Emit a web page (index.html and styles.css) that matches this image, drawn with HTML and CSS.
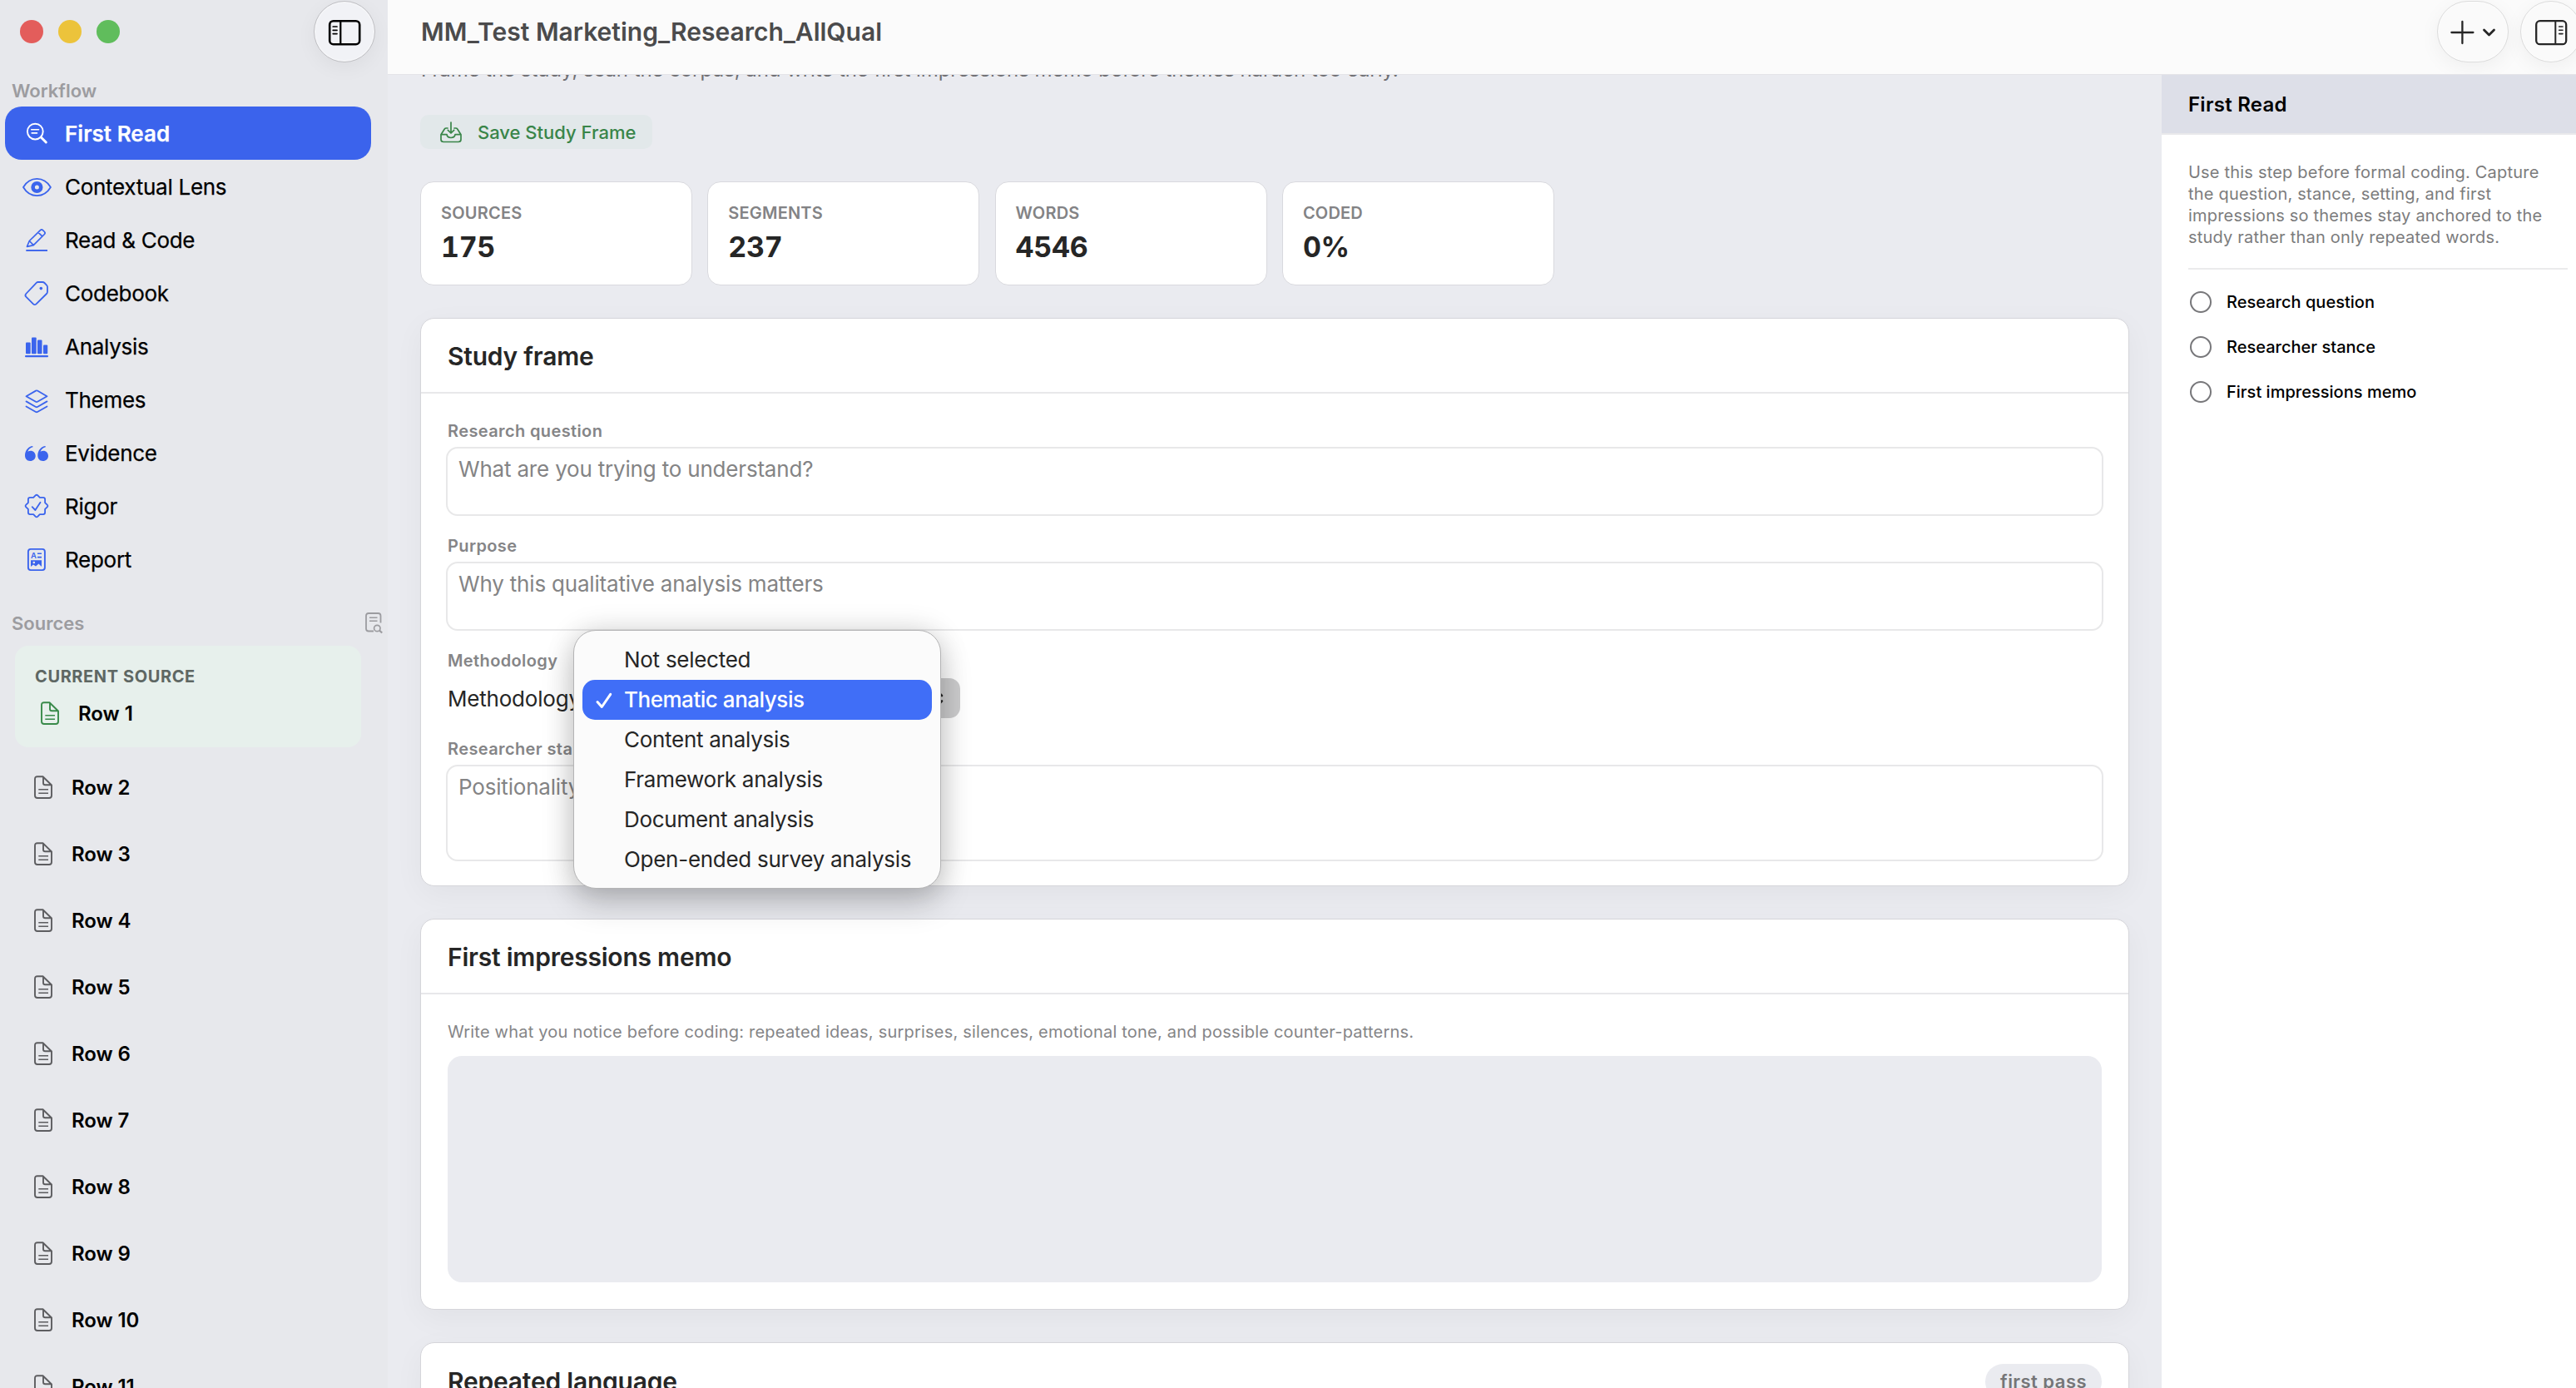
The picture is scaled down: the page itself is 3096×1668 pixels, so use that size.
FILE: index.html
```
<!DOCTYPE html>
<html lang="en">
<head>
<meta charset="utf-8">
<title>MM_Test Marketing_Research_AllQual</title>
<link rel="stylesheet" href="styles.css">
</head>
<body>
<svg class="defs" width="0" height="0">
  <symbol id="doc" viewBox="0 0 24 30">
    <path d="M5 2.2H11.5L22 12.5V25Q22 28 19 28H5Q2 28 2 25V5.2Q2 2.2 5 2.2Z M12 2.5V10Q12 12.3 14.3 12.3H21.8" fill="none" stroke="currentColor" stroke-width="1.9" stroke-linejoin="round"/>
    <path d="M6.3 17.8H18M6.3 22.2H18" fill="none" stroke="currentColor" stroke-width="1.5"/>
  </symbol>
</svg>
<div class="window">
  <aside class="sidebar">
    <div class="titlebar">
      <div class="lights"><i class="light red"></i><i class="light yellow"></i><i class="light green"></i></div>
      <button class="glass round" aria-label="Toggle sidebar">
        <svg width="40" height="32" viewBox="0 0 40 32" fill="none" stroke="currentColor"><rect x="2.2" y="2.2" width="36" height="28" rx="4.5" stroke-width="2.6"/><path d="M15.3 2V30" stroke-width="2.2"/><path d="M6.2 9H11M6.2 13.3H11M6.2 17.6H11" stroke-width="1.7" stroke-linecap="round"/></svg>
      </button>
    </div>

    <h2 class="section">Workflow</h2>
    <nav class="nav">
      <a class="nav-item active"><svg class="nav-icon" viewBox="0 0 36 36" fill="none" stroke="currentColor" stroke-linecap="round"><circle cx="16.3" cy="16.1" r="9.4" stroke-width="1.9"/><path d="M23.3 23L29.3 29" stroke-width="3"/><path d="M11.7 13.8H20.5M12.2 17.9H18.5" stroke-width="1.6"/></svg>First Read</a>
      <a class="nav-item"><svg class="nav-icon" viewBox="0 0 36 36" fill="none" stroke="currentColor"><path d="M2 19C5.500 13 11.500 8.900 18.400 8.900S31.300 13 34.900 19C31.300 25 25.300 29.100 18.400 29.100S5.500 25 2 19Z" stroke-width="1.8" stroke-linejoin="round"/><circle cx="18.400" cy="19" r="4.800" stroke-width="4.600"/></svg>Contextual Lens</a>
      <a class="nav-item"><svg class="nav-icon" viewBox="0 0 36 36" fill="none" stroke="currentColor" stroke-width="1.7" stroke-linejoin="round"><path d="M6.500 26.300L9.300 19.500L22.500 6.600Q24 5.200 25.500 6.600L27.400 8.500Q28.900 10 27.400 11.500L14.300 24.600L6.500 26.300ZM20 9.300L25 14.200M9.300 19.500L14.300 24.600"/><path d="M5.300 31H31" stroke-width="1.900"/></svg>Read &amp; Code</a>
      <a class="nav-item"><svg class="nav-icon" viewBox="0 0 36 36" fill="none" stroke="currentColor" stroke-width="1.800" stroke-linejoin="round"><path d="M19.500 5H25Q26.500 5 27.500 6L30 8.600Q31 9.600 31 11V16.500Q31 18 30 19L17.500 31.300Q15.700 33 14 31.300L5.300 22.600Q3.600 20.800 5.300 19L18 5.700Q18.700 5 19.500 5Z"/><circle cx="23.300" cy="12.600" r="1.800" fill="currentColor" stroke="none"/></svg>Codebook</a>
      <a class="nav-item"><svg class="nav-icon" viewBox="0 0 36 36" fill="currentColor"><rect x="5" y="13.500" width="5.700" height="13.700" rx="1"/><rect x="12" y="7.500" width="5.700" height="19.700" rx="1"/><rect x="19" y="10.400" width="5.500" height="16.800" rx="1"/><rect x="26" y="16.500" width="5.200" height="10.700" rx="1"/><rect x="4" y="29" width="28" height="2.200" rx="1"/></svg>Analysis</a>
      <a class="nav-item"><svg class="nav-icon" viewBox="0 0 36 36" fill="none" stroke="currentColor" stroke-width="1.800" stroke-linejoin="round" stroke-linecap="round"><path d="M17 7.600Q18 7 19 7.600L30.500 14.200L19 20.800Q18 21.400 17 20.800L5.500 14.200ZM5.500 20.400L17 27Q18 27.500 19 27L30.500 20.400M5.500 26.500L17 33Q18 33.500 19 33L30.500 26.500"/></svg>Themes</a>
      <a class="nav-item"><svg class="nav-icon" viewBox="0 0 36 36" fill="currentColor"><path d="M13.300 10C8.500 10.300 4 15 4 21.300C4 25.300 6.500 28 10.200 28C14 28 16.700 25.200 16.700 21.900C16.700 18.300 14.200 15.700 10.800 15.700C9.500 15.700 8.300 16 7.300 16.700C8.300 13.800 10.500 11.800 13.500 11.200Z"/><path transform="translate(15.300)" d="M13.300 10C8.500 10.300 4 15 4 21.300C4 25.300 6.500 28 10.200 28C14 28 16.700 25.200 16.700 21.900C16.700 18.300 14.200 15.700 10.800 15.700C9.500 15.700 8.300 16 7.300 16.700C8.300 13.800 10.500 11.800 13.500 11.200Z"/></svg>Evidence</a>
      <a class="nav-item"><svg class="nav-icon" viewBox="0 0 36 36" fill="none" stroke="currentColor" stroke-width="1.800" stroke-linejoin="round" stroke-linecap="round"><path d="M16.600 5.400Q18 4 19.400 5.400L21.800 7.900H25.800Q28.100 7.900 28.100 10.200V14.200L30.700 16.700Q32.100 18 30.700 19.400L28.100 21.900V25.800Q28.100 28.100 25.800 28.100H21.800L19.400 30.700Q18 32.100 16.600 30.700L14.200 28.100H10.200Q7.900 28.100 7.900 25.800V21.900L5.300 19.400Q3.900 18 5.300 16.700L7.900 14.200V10.200Q7.900 7.900 10.200 7.900H14.200Z"/><path d="M12.700 19.200L16.400 23L22.500 13.700"/></svg>Rigor</a>
      <a class="nav-item"><svg class="nav-icon" viewBox="0 0 36 36" fill="none" stroke="currentColor"><rect x="7.900" y="5.900" width="20" height="25.200" rx="3" stroke-width="1.900"/><text x="11" y="16.600" class="glyph-a">A</text><path d="M19 11.200H24M19 15.600H24" stroke-width="1.600"/><path d="M11 19.200H24V27L20.500 23.500L17 26.500L14 24.500L11 27Z" fill="currentColor" stroke="none"/><circle cx="14.800" cy="22" r="1.300" fill="#e7e8ec" stroke="none"/></svg>Report</a>
    </nav>

    <div class="section-row">
      <h2 class="section">Sources</h2>
      <svg width="24" height="28" viewBox="0 0 24 28" fill="none" stroke="currentColor"><path d="M11 23.500H5Q2 23.500 2 20.500V5Q2 2 5 2H16.500Q19.500 2 19.500 5V13.500" stroke-width="1.800"/><path d="M6 7.300H15.500M6 11.300H15.500" stroke-width="1.400"/><circle cx="15.300" cy="20" r="3.700" stroke-width="1.700"/><path d="M18 22.700L21.200 25.500" stroke-width="2.200"/></svg>
    </div>

    <div class="current">
      <div class="current-label">CURRENT SOURCE</div>
      <div class="current-row"><svg class="doc-icon"><use href="#doc"/></svg>Row 1</div>
    </div>
    <ul class="rows">
      <li><svg class="doc-icon"><use href="#doc"/></svg>Row 2</li>
      <li><svg class="doc-icon"><use href="#doc"/></svg>Row 3</li>
      <li><svg class="doc-icon"><use href="#doc"/></svg>Row 4</li>
      <li><svg class="doc-icon"><use href="#doc"/></svg>Row 5</li>
      <li><svg class="doc-icon"><use href="#doc"/></svg>Row 6</li>
      <li><svg class="doc-icon"><use href="#doc"/></svg>Row 7</li>
      <li><svg class="doc-icon"><use href="#doc"/></svg>Row 8</li>
      <li><svg class="doc-icon"><use href="#doc"/></svg>Row 9</li>
      <li><svg class="doc-icon"><use href="#doc"/></svg>Row 10</li>
      <li><svg class="doc-icon"><use href="#doc"/></svg>Row 11</li>
    </ul>
  </aside>

  <div class="content">
    <header class="toolbar">
      <h1 class="doc-title">MM_Test Marketing_Research_AllQual</h1>
      <div class="toolbar-actions">
        <button class="glass add" aria-label="Add">
          <svg width="56" height="30" viewBox="0 0 56 30" fill="none" stroke="currentColor" stroke-linecap="round" stroke-linejoin="round"><path d="M15.400 2V28M2.400 15H28.400" stroke-width="2.300"/><path d="M41.500 12L47.500 18L53.500 12" stroke-width="2.800"/></svg>
        </button>
        <button class="glass round" aria-label="Toggle inspector">
          <svg width="40" height="32" viewBox="0 0 40 32" fill="none" stroke="currentColor"><rect x="2.200" y="2.200" width="36" height="28" rx="4.500" stroke-width="2.300"/><path d="M25.300 2V30" stroke-width="2"/><path d="M29.700 9H34M29.700 13.300H34M29.700 17.600H34" stroke-width="1.600" stroke-linecap="round"/></svg>
        </button>
      </div>
    </header>

    <div class="body">
      <main class="main">
        <p class="subtitle">Frame the study, scan the corpus, and write the first impressions memo before themes harden too early.</p>
        <button class="save">
          <svg width="28" height="28" viewBox="0 0 28 28" fill="none" stroke="currentColor" stroke-width="1.700" stroke-linejoin="round" stroke-linecap="round"><path d="M10 9H8.200Q7 9 6.300 10L2 16.700V22.500Q2 25.500 5 25.500H23Q26 25.500 26 22.500V16.700L21.700 10Q21 9 19.800 9H18M2 16.700H9Q9.500 20.500 14 20.500T19 16.700H26"/><path d="M14 2V14.500M10.300 11.300L14 15L17.700 11.300"/></svg>
          Save Study Frame
        </button>

        <section class="stats">
          <div class="stat"><div class="stat-label">SOURCES</div><div class="stat-value">175</div></div>
          <div class="stat"><div class="stat-label">SEGMENTS</div><div class="stat-value">237</div></div>
          <div class="stat"><div class="stat-label">WORDS</div><div class="stat-value">4546</div></div>
          <div class="stat"><div class="stat-label">CODED</div><div class="stat-value">0%</div></div>
        </section>

        <section class="panel">
          <div class="panel-head"><h2>Study frame</h2></div>
          <div class="panel-body">
            <div class="field"><label>Research question</label><div class="input">What are you trying to understand?</div></div>
            <div class="field"><label>Purpose</label><div class="input">Why this qualitative analysis matters</div></div>
            <div class="field">
              <label>Methodology</label>
              <div class="picker">
                <span>Methodology</span>
                <div class="picker-button"><svg width="14" height="24" viewBox="0 0 14 24" fill="none" stroke="currentColor" stroke-width="2.600" stroke-linecap="round" stroke-linejoin="round"><path d="M2 9L7 4L12 9M2 15.500L7 20.500L12 15.500"/></svg></div>
                <ul class="menu">
                  <li>Not selected</li>
                  <li class="selected"><svg class="check" width="22" height="22" viewBox="0 0 22 22" fill="none" stroke="currentColor" stroke-width="3" stroke-linecap="round" stroke-linejoin="round"><path d="M3 12.500L8.300 18.500L18.700 3.300"/></svg>Thematic analysis</li>
                  <li>Content analysis</li>
                  <li>Framework analysis</li>
                  <li>Document analysis</li>
                  <li>Open-ended survey analysis</li>
                </ul>
              </div>
            </div>
            <div class="field stance"><label>Researcher stance</label><div class="input tall">Positionality</div></div>
          </div>
        </section>

        <section class="panel">
          <div class="panel-head"><h2>First impressions memo</h2></div>
          <div class="panel-body memo-body">
            <p class="hint">Write what you notice before coding: repeated ideas, surprises, silences, emotional tone, and possible counter-patterns.</p>
            <div class="memo"></div>
          </div>
        </section>

        <section class="panel">
          <div class="panel-head repeated"><h2>Repeated language</h2><span class="badge">first pass</span></div>
        </section>
      </main>

      <aside class="inspector">
        <h2 class="inspector-title">First Read</h2>
        <div class="inspector-body">
          <p>Use this step before formal coding. Capture<br>the question, stance, setting, and first<br>impressions so themes stay anchored to the<br>study rather than only repeated words.</p>
          <ul class="checklist">
            <li><i></i>Research question</li>
            <li><i></i>Researcher stance</li>
            <li><i></i>First impressions memo</li>
          </ul>
        </div>
      </aside>
    </div>
  </div>
</div>
</body>
</html>
```
FILE: styles.css
```
* { box-sizing: border-box; margin: 0; padding: 0; }
html, body { height: 100%; overflow: hidden; }
body { font-family: Inter, "Liberation Sans", sans-serif; font-size: 26px; color: #262626; background: #eaebf0; }
ul { list-style: none; }
button { font: inherit; border: 0; background: none; }
svg { display: block; flex: none; }
.defs { position: absolute; }

.window { display: flex; width: 3096px; height: 1668px; overflow: hidden; }

/* Sidebar */
.sidebar { width: 466px; flex: none; background: #e7e8ec; color: #000; overflow: hidden; }
.titlebar { height: 95px; display: flex; justify-content: space-between; align-items: flex-start; padding: 1px 15px 0 24px; }
.lights { display: flex; gap: 18px; padding-top: 23px; }
.light { width: 28px; height: 28px; border-radius: 50%; }
.red { background: #e35d5b; }
.yellow { background: #ecc33b; }
.green { background: #60bd5c; }
.glass { display: flex; align-items: center; justify-content: center; height: 74px; border: 1px solid #c9c9cc; border-radius: 37px; box-shadow: 0 6px 24px rgba(0, 0, 0, .05), inset 0 0 3px #fff; }
.round { width: 74px; }
.sidebar .glass { background: #f1f2f6; border-color: #bfbfc3; color: #000; padding-top: 2px; }

.section { font-size: 22px; line-height: 28px; font-weight: 600; color: #9c9ca0; padding-left: 14px; letter-spacing: 0; }
.nav { padding: 5px 20px 0 6px; }
.nav-item { display: flex; align-items: center; gap: 16px; height: 64px; padding-left: 20px; border-radius: 20px; letter-spacing: -.28px; -webkit-text-stroke: .25px; }
.nav-icon { width: 36px; height: 36px; color: #3b64ed; -webkit-text-stroke: 0; }
.active { background: #3b63ec; color: #fff; font-weight: 600; letter-spacing: .04px; }
.active .nav-icon { color: #fff; }
.glyph-a { font-size: 9.500px; font-weight: 600; fill: currentColor; stroke: none; letter-spacing: 0; }

.section-row { display: flex; justify-content: space-between; align-items: center; height: 28px; margin-top: 31px; padding-right: 4px; color: #9c9ca0; }
.current { margin: 13px 32px 0 18px; height: 122px; padding: 25px 25px 0 24px; border-radius: 16px; background: #e7f0ec; }
.current-label { font-size: 20px; line-height: 24px; font-weight: 700; letter-spacing: .6px; color: #5e6763; }
.current-row { display: flex; align-items: center; gap: 22px; height: 28px; margin-top: 18px; padding-left: 6px; font-size: 24px; font-weight: 600; }
.current-row .doc-icon { color: #398a4a; }
.doc-icon { width: 24px; height: 30px; color: #5d5d60; }
.rows { padding-top: 8px; }
.rows li { display: flex; align-items: center; gap: 22px; height: 80px; padding-left: 40px; font-size: 24px; font-weight: 600; letter-spacing: -.1px; }

/* Toolbar */
.content { flex: 1; min-width: 0; display: flex; flex-direction: column; }
.toolbar { height: 90px; flex: none; display: flex; justify-content: space-between; padding: 1px 0 0 40px; background: #fbfbfb; border-bottom: 1px solid #e4e4e8; overflow: hidden; }
.doc-title { font-size: 30px; line-height: 75px; font-weight: 600; color: #4b4b4c; }
.toolbar-actions { display: flex; gap: 14px; margin-right: -7px; }
.toolbar .glass { background: #fafafa; border-color: #dcdcdc; color: #262626; flex: none; padding-top: 2px; }
.toolbar .add { width: 86px; padding-top: 1px; }

/* Main column */
.body { flex: 1; min-height: 0; display: flex; }
.main { flex: 1; min-width: 0; padding: 0 39px; overflow: hidden; background: #eaebf0; }
.subtitle { margin-top: -21px; padding-left: 1px; font-size: 24px; line-height: 30px; letter-spacing: -.07px; color: #6f6f73; white-space: nowrap; }
.save { display: flex; align-items: center; gap: 18px; width: 279px; height: 41px; margin-top: 39px; padding-left: 23px; border-radius: 10px; background: #e2e8ea; color: #398549; font-size: 22px; font-weight: 500; white-space: nowrap; }

.stats { display: grid; grid-template-columns: repeat(4, 327px); gap: 18.300px; margin-top: 39px; }
.stat { height: 125px; padding: 25px 24px 0; border: 1px solid #d9d9de; border-radius: 16px; background: #fff; }
.stat-label { font-size: 20px; line-height: 24px; font-weight: 600; letter-spacing: .2px; color: #838385; }
.stat-value { margin-top: 9px; font-size: 34px; line-height: 40px; font-weight: 700; font-variant-numeric: tabular-nums; letter-spacing: -.3px; }

.panel { margin-top: 39px; border: 1px solid #d5d5da; border-radius: 17px; background: #fff; box-shadow: 0 10px 36px rgba(0, 0, 0, .045); }
.panel-head { display: flex; align-items: center; height: 90px; padding: 2px 32px 0; border-bottom: 2px solid #e8e8ea; }
.panel-head h2 { font-size: 30px; line-height: 36px; font-weight: 600; letter-spacing: -.22px; }
.panel-body { padding: 33px 32px 29px; }
.field + .field { margin-top: 24px; }
.field.stance { margin-top: 25px; }
.field label { display: block; font-size: 20px; line-height: 24px; font-weight: 600; letter-spacing: .38px; color: #858587; }
.input { height: 83px; margin: 7px -2px 0; padding: 9px 13px; border: 2px solid #e8e8e9; border-radius: 14px; line-height: 32px; letter-spacing: -.19px; color: #848485; }
.tall { height: 116px; }
.picker { position: relative; display: flex; align-items: center; gap: 8px; height: 48px; margin-top: 9px; letter-spacing: -.2px; }
.picker-button { display: flex; align-items: center; justify-content: flex-end; width: 448px; height: 48px; padding-right: 20px; border-radius: 13px; background: #cdcdce; }
.menu { position: absolute; z-index: 2; left: 151px; top: -58px; width: 442px; padding: 11px 10px 10px; border: 1px solid #b4b4b5; border-radius: 27px; background: #fbfbfb; box-shadow: 0 0 34px rgba(0, 0, 0, .14), 0 18px 38px rgba(0, 0, 0, .18); }
.menu li { position: relative; height: 48px; padding-left: 50px; line-height: 48px; border-radius: 15px; letter-spacing: -.28px; white-space: nowrap; }
.menu .selected { background: #406ef7; color: #fff; font-weight: 500; letter-spacing: -.47px; }
.check { position: absolute; left: 15px; top: 14px; }

.panel-body.memo-body { padding-top: 32px; padding-bottom: 32px; }
.hint { font-size: 20px; line-height: 26px; letter-spacing: .21px; color: #858587; }
.memo { height: 272px; margin-top: 16px; border-radius: 17px; background: #eaebf0; }
.panel-head.repeated { height: 110px; align-items: flex-start; justify-content: space-between; padding-top: 25px; }
.repeated h2 { line-height: 42px; }
.badge { padding: 0 18px; border-radius: 23px; background: #eaebf0; color: #757577; font-size: 22px; line-height: 43px; font-weight: 600; letter-spacing: .47px; }

/* Inspector */
.inspector { width: 498px; flex: none; background: #fff; color: #000; }
.inspector-title { height: 72px; padding-left: 32px; border-bottom: 2px solid #e9e9eb; background: #dddfe8; font-size: 24px; line-height: 71px; font-weight: 600; letter-spacing: .26px; }
.inspector-body { padding: 32px 10px 0 32px; }
.inspector-body p { padding-bottom: 24px; border-bottom: 2px solid #ebebec; font-size: 20px; line-height: 26px; letter-spacing: .2px; color: #7c7c7d; white-space: nowrap; }
.checklist { padding-top: 12px; }
.checklist li { display: flex; align-items: center; gap: 18px; height: 54px; padding-left: 2px; font-size: 20px; font-weight: 500; letter-spacing: .02px; }
.checklist i { width: 26px; height: 26px; border: 2px solid #77777a; border-radius: 50%; }
```
